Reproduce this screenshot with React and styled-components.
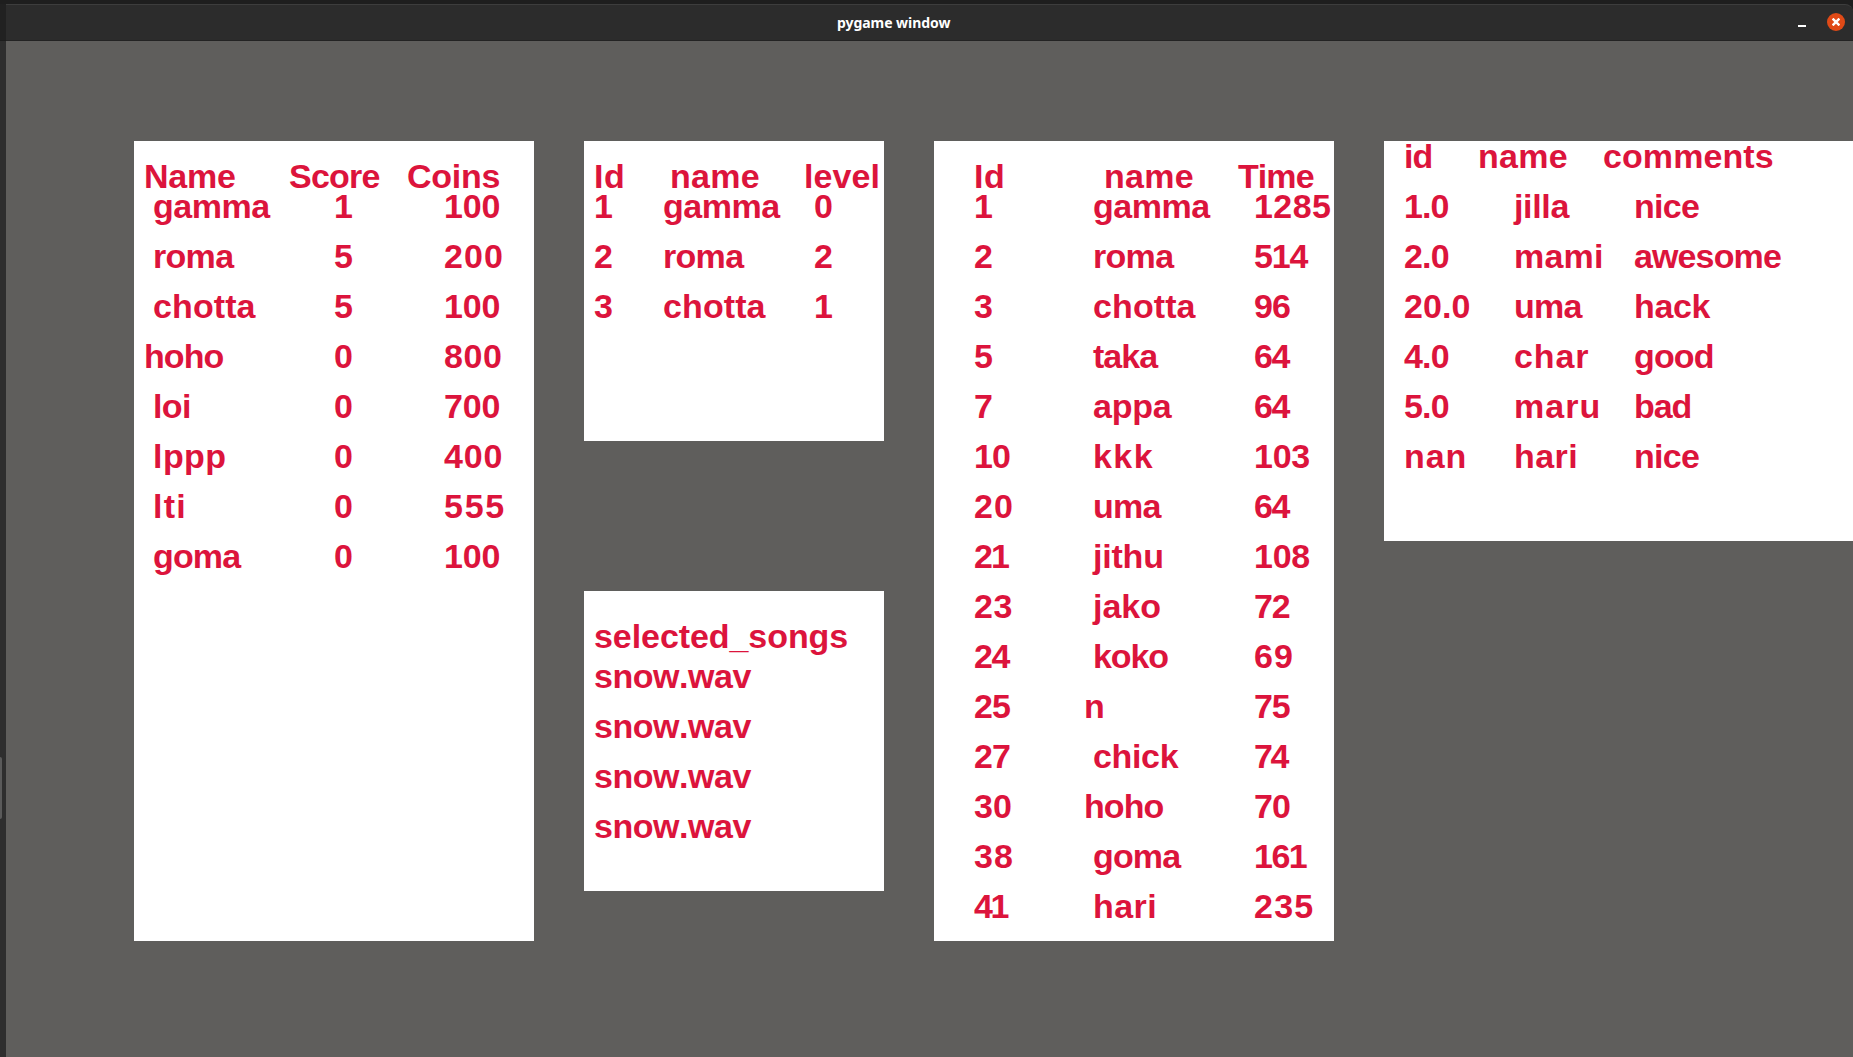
import React from 'react';
import styled, { createGlobalStyle } from 'styled-components';

const GlobalStyle = createGlobalStyle`
  *, *::before, *::after { box-sizing: border-box; }
  html, body { margin: 0; background: #1e1e1e; overflow: hidden; }
`;

const Desktop = styled.div`
  display: flex;
  width: 1853px;
  height: 1057px;
  overflow: hidden;
  background: #1e1e1e;
`;

const Dock = styled.aside`
  flex: none;
  width: 6px;
  padding-top: 757px;
  background: linear-gradient(#1e1e1e 4px, #212121 4px 40px, #1c1c1c 40px 41px, #2e2e2e 41px);
`;

const DockHandle = styled.div`
  width: 2px;
  height: 62px;
  border-radius: 0 2px 2px 0;
  background: #5a5a5a;
`;

const Window = styled.main`
  flex: 1;
  min-width: 0;
  display: flex;
  flex-direction: column;
  padding-top: 4px;
`;

const TitleBar = styled.header`
  flex: none;
  display: flex;
  align-items: center;
  height: 37px;
  padding: 0 8px 0 831px;
  border-top: 1px solid #3d3d3d;
  border-bottom: 1px solid #232323;
  border-top-right-radius: 8px;
  background: #2c2c2c;
`;

const Title = styled.h1`
  flex: 1;
  margin: 0;
  font: bold 14px/20px "Noto Sans", "Open Sans", sans-serif;
  letter-spacing: -0.05px;
  white-space: nowrap;
  color: #fff;
`;

const MinimizeButton = styled.button`
  width: 8px;
  height: 2px;
  margin: 6px 21px 0 0;
  padding: 0;
  border: 0;
  background: #fff;
`;

const CloseButton = styled.button`
  display: grid;
  place-items: center;
  width: 18px;
  height: 18px;
  padding: 0;
  border: 0;
  border-radius: 50%;
  background: #e04a17;
  margin-top: -1px;
`;

const Screen = styled.section`
  flex: 1;
  display: flex;
  align-items: flex-start;
  gap: 50px;
  padding: 100px 0 0 128px;
  background: #5f5e5c;
`;

const Stack = styled.div`
  flex: none;
  display: flex;
  flex-direction: column;
  gap: 150px;
`;

const Panel = styled.section`
  flex: none;
  width: ${(p) => p.$width}px;
  height: ${(p) => p.$height}px;
  padding-left: ${(p) => p.$inset}px;
  background: #fff;
  color: #dc143c;
  font: bold 34px/50px "Liberation Sans", Arial, sans-serif;
  font-kerning: none;
  white-space: pre;
`;

const Row = styled.div`
  display: flex;
  height: 50px;
`;

const HeaderRow = styled(Row)`
  height: ${(p) => p.$height}px;
  line-height: ${(p) => p.$line}px;
`;

const Cell = styled.div`
  flex: none;
  width: ${(p) => p.$width}px;
  padding-left: ${(p) => p.$indent || 0}px;
  letter-spacing: ${(p) => p.$tracking || 0}px;
`;

const tracking = {
  Name: -0.25, Score: -0.75, Coins: -0.25, gamma: -0.45, roma: -0.7, chotta: 0.1,
  hoho: -0.95, loi: -0.6, lppp: 0.44, lti: 1.27, goma: -0.85, Id: 0.55, name: 0.3,
  level: 0.1, Time: -0.94, taka: -0.95, appa: -0.2, kkk: 1.44, uma: -0.8,
  jithu: -0.2, jako: 0, koko: -1.1, chick: -0.35, hari: 0.46, id: -1,
  comments: 0.08, nan: 0.96, jilla: -0.35, mami: 0.21, char: 0.9, maru: 1.08,
  nice: -0.71, awesome: -0.88, hack: -0.35, good: -0.87, bad: -1.1,
  selected_songs: -0.07, 'snow.wav': -0.45,
  100: -0.2, 200: 1.09, 800: 0.59, 700: -0.2, 400: 0.9, 555: 1.74,
  1285: 0.42, 514: -1.2, 96: -1, 64: -1.3, 103: -0.26, 108: -0.26, 72: -1.2, 69: 1.09,
  75: -1.2, 74: -2.5, 70: -1, 161: -1.5, 235: 1.24,
  10: -1, 20: 1.2, 21: -1.8, 23: 0.5, 24: -1.4, 25: -1, 27: -1, 30: 0.2,
  38: 1, 41: -2.4, '1.0': -0.9, '2.0': -0.8, '4.0': -0.8, '5.0': -0.8, '20.0': 0.1,
};

const tables = {
  scores: {
    size: [400, 800, 10],
    header: { height: 40, line: 70, widths: [145, 118, 90], cells: ['Name', 'Score', 'Coins'] },
    widths: [190, 110, 80],
    indents: [9, 0, 0],
    flush: ['hoho'],
    rows: [
      ['gamma', '1', '100'], ['roma', '5', '200'], ['chotta', '5', '100'], ['hoho', '0', '800'],
      ['loi', '0', '700'], ['lppp', '0', '400'], ['lti', '0', '555'], ['goma', '0', '100'],
    ],
  },
  levels: {
    size: [300, 300, 10],
    header: { height: 40, line: 70, widths: [76, 134, 80], cells: ['Id', 'name', 'level'] },
    widths: [69, 151, 60],
    rows: [['1', 'gamma', '0'], ['2', 'roma', '2'], ['3', 'chotta', '1']],
  },
  songs: {
    size: [300, 300, 10],
    header: { height: 60, line: 90, widths: [270], cells: ['selected_songs'] },
    widths: [270],
    rows: [['snow.wav'], ['snow.wav'], ['snow.wav'], ['snow.wav']],
  },
  times: {
    size: [400, 800, 40],
    header: { height: 40, line: 70, widths: [130, 134, 90], cells: ['Id', 'name', 'Time'] },
    widths: [110, 170, 80],
    indents: [0, 9, 0],
    flush: ['n', 'hoho'],
    rows: [
      ['1', 'gamma', '1285'], ['2', 'roma', '514'], ['3', 'chotta', '96'], ['5', 'taka', '64'],
      ['7', 'appa', '64'], ['10', 'kkk', '103'], ['20', 'uma', '64'], ['21', 'jithu', '108'],
      ['23', 'jako', '72'], ['24', 'koko', '69'], ['25', 'n', '75'], ['27', 'chick', '74'],
      ['30', 'hoho', '70'], ['38', 'goma', '161'], ['41', 'hari', '235'],
    ],
  },
  comments: {
    size: [500, 400, 20],
    header: { height: 40, line: 30, widths: [74, 125, 200], cells: ['id', 'name', 'comments'] },
    widths: [110, 120, 200],
    rows: [
      ['1.0', 'jilla', 'nice'], ['2.0', 'mami', 'awesome'], ['20.0', 'uma', 'hack'],
      ['4.0', 'char', 'good'], ['5.0', 'maru', 'bad'], ['nan', 'hari', 'nice'],
    ],
  },
};

function Table({ data }) {
  const { size, header, widths, indents = [], flush = [], rows } = data;
  return (
    <Panel $width={size[0]} $height={size[1]} $inset={size[2]}>
      <HeaderRow $height={header.height} $line={header.line}>
        {header.cells.map((text, i) => (
          <Cell key={text} $width={header.widths[i]} $tracking={tracking[text]}>{text}</Cell>
        ))}
      </HeaderRow>
      {rows.map((row, r) => (
        <Row key={r}>
          {row.map((text, i) => (
            <Cell
              key={i}
              $width={widths[i]}
              $indent={flush.includes(text) ? 0 : indents[i]}
              $tracking={tracking[text]}
            >
              {text}
            </Cell>
          ))}
        </Row>
      ))}
    </Panel>
  );
}

export default function App() {
  return (
    <>
      <GlobalStyle />
      <Desktop>
        <Dock><DockHandle /></Dock>
        <Window>
          <TitleBar>
            <Title>pygame window</Title>
            <MinimizeButton aria-label="Minimize" />
            <CloseButton aria-label="Close">
              <svg width="8" height="8" viewBox="0 0 8 8" stroke="#fff" strokeWidth="2.4">
                <path d="M0.6 0.6 7.4 7.4M7.4 0.6 0.6 7.4" />
              </svg>
            </CloseButton>
          </TitleBar>
          <Screen>
            <Table data={tables.scores} />
            <Stack>
              <Table data={tables.levels} />
              <Table data={tables.songs} />
            </Stack>
            <Table data={tables.times} />
            <Table data={tables.comments} />
          </Screen>
        </Window>
      </Desktop>
    </>
  );
}
